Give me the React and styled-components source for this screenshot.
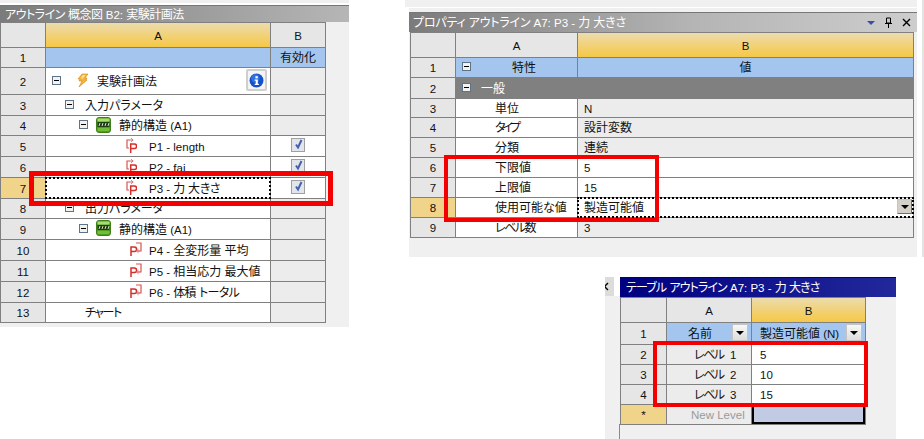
import React from 'react'
import styled, { createGlobalStyle } from 'styled-components'

const Global = createGlobalStyle`
  html, body { margin: 0; padding: 0; background: #fff; }
  body {
    font-family: "Noto Sans CJK JP", sans-serif;
    font-feature-settings: "palt";
    font-size: 12px;
    color: #111;
  }
`

const Page = styled.div`
  width: 924px;
  height: 439px;
  display: flex;
  overflow: hidden;
`

const LeftPanel = styled.section`
  position: relative;
  width: 349px;
  height: 327px;
  background: #f0f0f0;
`

const LeftTop = styled.div`
  height: 3px;
  border-bottom: 2px solid #fff;
`

const RightColumn = styled.div`
  margin-left: 56px;
  width: 519px;
  display: flex;
  flex-direction: column;
`

const UpperRow = styled.div`
  display: flex;
  gap: 5px;
`

const UpperStack = styled.div`
  width: 512px;
  display: flex;
  flex-direction: column;
`

const TopStrip = styled.div`
  height: 7px;
  background: #f0f0f0;
  border-bottom: 1px solid #fff;
`

const EdgeStrip = styled.div`
  width: 2px;
  height: 257px;
  background: #e4e4e4;
`

const PropsPanel = styled.section`
  position: relative;
  margin-left: 4px;
  height: 249px;
  background: #f0f0f0;
  padding-top: 4px;
  box-sizing: border-box;
`

const TablePanel = styled.section`
  position: relative;
  margin: 20px 0 0 200px;
  width: 291px;
  height: 162px;
  background: linear-gradient(180deg, #fff 19px, #f0f0f0 19px);
  box-sizing: border-box;
  padding-left: 15px;
  &::after {
    content: '';
    position: absolute;
    left: 14px;
    top: 147px;
    bottom: 0;
    width: 1px;
    background: #8a8a8a;
  }
`

const SideTab = styled.div`
  position: absolute;
  left: 0;
  top: 0;
  width: 9px;
  height: 19px;
  background: #dcdcdc;
  overflow: hidden;
  display: flex;
  align-items: center;
  svg { margin-left: -5px; }
`

const TitleBar = styled.div`
  height: ${p => p.$h}px;
  display: flex;
  align-items: center;
  justify-content: space-between;
  box-sizing: border-box;
  padding: 0 5px 2px ${p => p.$pl}px;
  color: #fff;
  white-space: nowrap;
  border-top: 1px solid ${p => (p.$navy ? '#00007e' : '#777')};
  background: ${p =>
    p.$navy
      ? 'linear-gradient(90deg, #000080, #22289a)'
      : p.$wide
        ? 'linear-gradient(90deg, #7b7b7b, #b4b4b4 55%, #cdcdcd)'
        : 'linear-gradient(90deg, #7b7b7b, #b6b6b6)'};
`

const Controls = styled.div`
  display: flex;
  align-items: center;
  gap: 9px;
  margin: 2px 1px 0 0;
`

const Grid = styled.div`
  display: grid;
  width: max-content;
  margin-left: ${p => p.$ml || 0}px;
  grid-template-columns: ${p => p.$cols};
  grid-template-rows: ${p => p.$rows};
  gap: 1px;
  background: #808080;
  border: 1px solid #808080;
`

const Cell = styled.div`
  display: flex;
  align-items: center;
  min-width: 0;
  white-space: nowrap;
  overflow: hidden;
  box-sizing: border-box;
  padding: 0 0 2px ${p => p.$pl || 0}px;
  justify-content: ${p => (p.$center ? 'center' : 'flex-start')};
  background: ${p => p.$bg || '#fff'};
  color: ${p => p.$color || 'inherit'};
`

const HeadCell = styled(Cell)`
  background: linear-gradient(180deg, #ecdcae, #f6c845);
`

const CornerCell = styled(Cell)`
  background: #e6e6e6;
`

const RowNum = styled(Cell)`
  justify-content: center;
  background: ${p => (p.$active ? '#efd48a' : '#e6e6e6')};
`

const FocusCell = styled(Cell)`
  position: relative;
  z-index: 1;
  overflow: visible;
  outline: 2px dotted #000;
  outline-offset: -1px;
`

const Spacer = styled.span`
  display: inline-block;
  flex: none;
  width: ${p => p.$w}px;
`

const TextRun = styled.span`
  white-space: pre;
  letter-spacing: ${p => p.$ls || 0}px;
`

const Lat = styled.span`
  font-family: "Liberation Sans", sans-serif;
  font-size: 11.5px;
  letter-spacing: 0;
`

const MinusBox = styled.span`
  display: inline-block;
  flex: none;
  position: relative;
  width: 9px;
  height: 9px;
  box-sizing: border-box;
  border: 1px solid #5f7388;
  background: #f2f2ee;
  &::after {
    content: '';
    position: absolute;
    left: 1px;
    right: 1px;
    top: 3px;
    height: 1px;
    background: #000;
  }
`

const Check = styled.span`
  display: block;
  width: 12px;
  height: 12px;
  border: 1px solid #a0a0a0;
  background: #e2e5ea;
  position: relative;
  svg { position: absolute; left: 1px; top: -1px; }
`

const InfoButton = styled.div`
  margin-left: auto;
  margin-right: 3px;
  width: 21px;
  height: 22px;
  box-sizing: border-box;
  border: 2px solid #cfcfcf;
  border-radius: 2px;
  background: #f4f4f4;
  display: flex;
  align-items: center;
  justify-content: center;
`

const DropBtn = styled.div`
  margin-left: auto;
  margin-right: ${p => p.$mr || 0}px;
  flex: none;
  width: ${p => p.$w}px;
  height: ${p => p.$h}px;
  background: ${p => p.$bg || 'linear-gradient(180deg, #f8f8f8, #dcdcdc)'};
  border: 1px solid #c4c4c4;
  border-right-color: ${p => p.$shade || '#c4c4c4'};
  border-bottom-color: ${p => p.$shade || '#c4c4c4'};
  border-radius: 1px;
  box-sizing: border-box;
  display: flex;
  align-items: center;
  justify-content: center;
  &::after {
    content: '';
    border-left: 4px solid transparent;
    border-right: 4px solid transparent;
    border-top: 4px solid #000;
  }
`

const RedBox = styled.div`
  position: absolute;
  z-index: 2;
  box-sizing: border-box;
  border: ${p => p.$b}px solid #f30000;
  left: ${p => p.$x}px;
  top: ${p => p.$y}px;
  width: ${p => p.$w}px;
  height: ${p => p.$h}px;
  pointer-events: none;
`

const NewLevel = styled(Cell)`
  background: #ececec;
  color: #9a9a9a;
`

const SelectedCell = styled(Cell)`
  background: #c1cce4;
  box-shadow: inset 0 0 0 2px #000;
`

// ascii runs are set smaller in a latin face, the rest stays in the cjk face
const Txt = ({ t, ls }) => (
  <TextRun $ls={ls}>
    {t.split(/([\x20-\x7e]+)/).map((s, i) => (i % 2 ? <Lat key={i}>{s}</Lat> : s))}
  </TextRun>
)

const Bolt = () => (
  <svg width="13" height="15" viewBox="0 0 13 15">
    <path d="M6 1h6L9 5h2l-1 2h1L3 14l3-6H3l1-2H2z" fill="#f2b23c" stroke="#d58a1e" strokeWidth="0.6" />
    <path d="M6.500 2h3L7 5.500H5z" fill="#fbe08a" />
  </svg>
)

const Sys = () => (
  <svg width="15" height="16" viewBox="0 0 15 16">
    <rect x="0.5" y="0.5" width="14" height="15" rx="2.500" fill="#4f9e1d" stroke="#3d7f18" />
    <rect x="1.500" y="1.500" width="12" height="3" rx="1" fill="#a9dc72" />
    <rect x="1.500" y="5" width="12" height="5" fill="#1f3d12" />
    <path d="M3 9l1-3M6 9l1-3M9 9l1-3M12 9l1-3" stroke="#e8f4d8" strokeWidth="0.9" />
    <rect x="1.500" y="11" width="12" height="3" rx="1" fill="#72bd38" />
  </svg>
)

const ParamIn = () => (
  <svg width="11" height="15" viewBox="0 0 11 15" fill="none">
    <path d="M3.500 2H1v8h2" stroke="#d9534f" strokeWidth="1.200" />
    <path d="M3 2h4M5 0.300L7.200 2 5 3.700" stroke="#d97470" strokeWidth="1" />
    <path d="M4.700 15V6h3.600a2 2 0 0 1 0 4.600H4.700" stroke="#d42f2a" strokeWidth="1.500" />
  </svg>
)

const ParamOut = () => (
  <svg width="12" height="14" viewBox="0 0 12 14" fill="none">
    <path d="M1 14V5h3.300a2 2 0 0 1 0 4.600H1" stroke="#d42f2a" strokeWidth="1.500" />
    <path d="M6 1h5v8H8" stroke="#d9534f" strokeWidth="1.200" />
    <path d="M10 9H6.500M8.500 7.200L6.500 9l2 1.800" stroke="#d97470" strokeWidth="1" />
  </svg>
)

const InfoIcon = () => (
  <svg width="15" height="15" viewBox="0 0 14 14">
    <circle cx="7" cy="7" r="6.500" fill="#1450c8" />
    <circle cx="6" cy="5" r="4" fill="#3f86ea" opacity="0.6" />
    <rect x="6" y="3" width="2.200" height="2" fill="#fff" />
    <path d="M5.300 6h2.900v4h1v1.200H5.300V10h1V7.200h-1z" fill="#fff" />
  </svg>
)

const CheckMark = () => (
  <svg width="11" height="12" viewBox="0 0 11 12" fill="none">
    <path d="M3 6.500l2 3L8.500 2" stroke="#4660b0" strokeWidth="2" />
  </svg>
)

const outlineRows = [
  { n: 2, tree: <><Spacer $w={6} /><MinusBox /><Spacer $w={15} /><Bolt /><Spacer $w={8} /><Txt t="実験計画法" /><InfoButton><InfoIcon /></InfoButton></>, grey: true },
  { n: 3, tree: <><Spacer $w={19} /><MinusBox /><Spacer $w={11} /><Txt t="入力パラメータ" /></>, grey: true },
  { n: 4, tree: <><Spacer $w={33} /><MinusBox /><Spacer $w={8} /><Sys /><Spacer $w={8} /><Txt t="静的構造 (A1)" /></>, grey: true },
  { n: 5, tree: <><Spacer $w={80} /><ParamIn /><Spacer $w={12} /><Txt t="P1 - length" /></>, check: true },
  { n: 6, tree: <><Spacer $w={80} /><ParamIn /><Spacer $w={12} /><Txt t="P2 - fai" /></>, check: true },
  { n: 7, tree: <><Spacer $w={80} /><ParamIn /><Spacer $w={12} /><Txt t="P3 - 力 大きさ" ls={-0.4} /></>, check: true, active: true },
  { n: 8, tree: <><Spacer $w={19} /><MinusBox /><Spacer $w={11} /><Txt t="出力パラメータ" /></>, grey: true },
  { n: 9, tree: <><Spacer $w={33} /><MinusBox /><Spacer $w={8} /><Sys /><Spacer $w={8} /><Txt t="静的構造 (A1)" /></>, grey: true },
  { n: 10, tree: <><Spacer $w={84} /><ParamOut /><Spacer $w={7} /><Txt t="P4 - 全変形量 平均" /></>, grey: true },
  { n: 11, tree: <><Spacer $w={84} /><ParamOut /><Spacer $w={7} /><Txt t="P5 - 相当応力 最大値" /></>, grey: true },
  { n: 12, tree: <><Spacer $w={84} /><ParamOut /><Spacer $w={7} /><Txt t="P6 - 体積 トータル" ls={-0.7} /></>, grey: true },
  { n: 13, tree: <><Spacer $w={39} /><Txt t="チャート" ls={-1.5} /></>, grey: true },
]

const propRows = [
  { n: 3, a: '単位', b: 'N' },
  { n: 4, a: 'タイプ', ls: -3, b: '設計変数' },
  { n: 5, a: '分類', b: '連続' },
  { n: 6, a: '下限値', b: '5', white: true },
  { n: 7, a: '上限値', b: '15', white: true },
  { n: 8, a: '使用可能な値', b: '製造可能値', focus: true },
  { n: 9, a: 'レベル数', ls: -1.5, b: '3' },
]

const levels = [
  { n: 2, a: 'レベル  1', b: '5' },
  { n: 3, a: 'レベル  2', b: '10' },
  { n: 4, a: 'レベル  3', b: '15' },
]

const App = () => (
  <Page>
    <Global />
    <LeftPanel>
      <LeftTop />
      <TitleBar $h={17} $pl={5}><Txt t="アウトライン 概念図 B2: 実験計画法" ls={-0.5} /></TitleBar>
      <Grid $cols="44px 224px 54px" $rows="24px 19px 26px 20px 19px 20px 20px 20px 19px 20px 20px 20px 20px 19px">
        <CornerCell />
        <HeadCell $center><Txt t="A" /></HeadCell>
        <CornerCell $center><Txt t="B" /></CornerCell>
        <RowNum><Txt t="1" /></RowNum>
        <Cell $bg="#a4c6ee" />
        <Cell $bg="#a4c6ee" $center><Txt t="有効化" /></Cell>
        {outlineRows.map(r => (
          <React.Fragment key={r.n}>
            <RowNum $active={r.active}><Txt t={String(r.n)} /></RowNum>
            {r.active ? <FocusCell>{r.tree}</FocusCell> : <Cell>{r.tree}</Cell>}
            <Cell $center $bg={r.grey ? '#ececec' : '#fff'}>
              {r.check && <Check><CheckMark /></Check>}
            </Cell>
          </React.Fragment>
        ))}
      </Grid>
      <RedBox $b={5} $x={29} $y={171} $w={304} $h={35} />
    </LeftPanel>

    <RightColumn>
      <UpperRow>
        <UpperStack>
          <TopStrip />
          <PropsPanel>
            <TitleBar $h={20} $wide $pl={4}>
              <Txt t="プロパティ アウトライン A7: P3 - 力 大きさ" ls={-0.2} />
              <Controls>
                <svg width="8" height="6" viewBox="0 0 8 6"><path d="M0 1h8L4 5z" fill="#3c4ea0" /></svg>
                <svg width="9" height="11" viewBox="0 0 9 11" fill="none" stroke="#000"><path d="M2.500 1h4v5h-4zM1 6.500h7M4.500 7v4" /></svg>
                <svg width="9" height="9" viewBox="0 0 9 9" fill="none" stroke="#000" strokeWidth="1.400"><path d="M1 1l7 7M8 1L1 8" /></svg>
              </Controls>
            </TitleBar>
            <Grid $ml={1} $cols="44px 121px 335px" $rows="24px 19px 20px 18px 19px 19px 19px 19px 19px 19px">
              <CornerCell />
              <CornerCell $center><Txt t="A" /></CornerCell>
              <HeadCell $center><Txt t="B" /></HeadCell>
              <RowNum><Txt t="1" /></RowNum>
              <Cell $bg="#a4c6ee" $pl={6}><MinusBox /><Spacer $w={41} /><Txt t="特性" /></Cell>
              <Cell $bg="#a4c6ee" $center><Txt t="値" /></Cell>
              <RowNum><Txt t="2" /></RowNum>
              <Cell $bg="#808080" $color="#fff" $pl={6}><MinusBox /><Spacer $w={10} /><Txt t="一般" /></Cell>
              <Cell $bg="#808080" />
              {propRows.map(r => (
                <React.Fragment key={r.n}>
                  <RowNum $active={r.focus}><Txt t={String(r.n)} /></RowNum>
                  <Cell $pl={39}><Txt t={r.a} ls={r.ls} /></Cell>
                  {r.focus ? (
                    <FocusCell $pl={6}>
                      <Txt t={r.b} />
                      <DropBtn $w={15} $h={15} $mr={1} $bg="#d4d0c8" $shade="#6e6e6e" />
                    </FocusCell>
                  ) : (
                    <Cell $pl={6} $bg={r.white ? '#fff' : '#ececec'}><Txt t={r.b} /></Cell>
                  )}
                </React.Fragment>
              ))}
            </Grid>
            <RedBox $b={4} $x={35} $y={147} $w={215} $h={67} />
          </PropsPanel>
        </UpperStack>
        <EdgeStrip />
      </UpperRow>

      <TablePanel>
        <SideTab>
          <svg width="9" height="9" viewBox="0 0 9 9" fill="none" stroke="#000" strokeWidth="1.400"><path d="M1 1l7 7M8 1L1 8" /></svg>
        </SideTab>
        <TitleBar $h={20} $navy $pl={6}><Txt t="テーブル アウトライン A7: P3 - 力 大きさ" ls={-0.9} /></TitleBar>
        <Grid $cols="45px 84px 113px" $rows="24px 21px 19px 19px 19px 19px">
          <CornerCell />
          <CornerCell $center><Txt t="A" /></CornerCell>
          <HeadCell $center><Txt t="B" /></HeadCell>
          <RowNum><Txt t="1" /></RowNum>
          <Cell $bg="#a4c6ee" $pl={21}><Txt t="名前" /><DropBtn $w={16} $h={17} $mr={3} /></Cell>
          <Cell $bg="#a4c6ee" $pl={8}><Txt t="製造可能値 (N)" /><DropBtn $w={16} $h={17} $mr={3} /></Cell>
          {levels.map(r => (
            <React.Fragment key={r.n}>
              <RowNum><Txt t={String(r.n)} /></RowNum>
              <Cell $pl={27} $bg="#ececec"><Txt t={r.a} ls={-1.5} /></Cell>
              <Cell $pl={8}><Txt t={r.b} /></Cell>
            </React.Fragment>
          ))}
          <RowNum $active><Txt t="*" /></RowNum>
          <NewLevel $pl={24}><Txt t="New Level" /></NewLevel>
          <SelectedCell />
        </Grid>
        <RedBox $b={4} $x={48} $y={64} $w={215} $h={66} />
      </TablePanel>
    </RightColumn>
  </Page>
)

export default App
